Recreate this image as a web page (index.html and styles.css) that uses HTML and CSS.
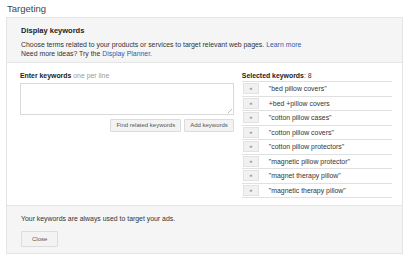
FILE: index.html
```html
<!DOCTYPE html>
<html>
<head>
<meta charset="utf-8">
<link rel="stylesheet" href="styles.css">
</head>
<body>
<div class="title">Targeting</div>
<div class="panel">
  <div class="head">
    <div class="head-title">Display keywords</div>
    <div class="desc">Choose terms related to your products or services to target relevant web pages. <a class="link">Learn more</a><br>Need more ideas? Try the <a class="link">Display Planner</a>.</div>
  </div>
  <div class="body">
    <div class="left">
      <div class="label"><b>Enter keywords</b> <span class="hint">one per line</span></div>
      <div class="textarea"><span class="grip"></span></div>
      <div class="btns">
        <span class="btn">Find related keywords</span>
        <span class="btn">Add keywords</span>
      </div>
    </div>
    <div class="right">
      <div class="label sel"><b>Selected keywords</b>: 8</div>
      <div class="row"><span class="rm">«</span><span class="kw">"bed pillow covers"</span></div>
      <div class="row"><span class="rm">«</span><span class="kw">+bed +pillow covers</span></div>
      <div class="row"><span class="rm">«</span><span class="kw">"cotton pillow cases"</span></div>
      <div class="row"><span class="rm">«</span><span class="kw">"cotton pillow covers"</span></div>
      <div class="row"><span class="rm">«</span><span class="kw">"cotton pillow protectors"</span></div>
      <div class="row"><span class="rm">«</span><span class="kw">"magnetic pillow protector"</span></div>
      <div class="row"><span class="rm">«</span><span class="kw">"magnet therapy pillow"</span></div>
      <div class="row"><span class="rm">«</span><span class="kw">"magnetic therapy pillow"</span></div>
    </div>
  </div>
  <div class="foot">
    <div class="note">Your keywords are always used to target your ads.</div>
    <span class="btn close">Close</span>
  </div>
</div>
</body>
</html>
```
FILE: styles.css
```css
html, body { margin: 0; padding: 0; background: #fff; }
body {
  font-family: Arial, "Liberation Sans", sans-serif;
  font-size: 6.9px;
  color: #333;
  padding: 3px 3px 0 6px;
  width: 397px;
}
.title { font-size: 9.5px; color: #444; padding-left: 1px; height: 14px; line-height: 12px; }
.panel {
  border: 1px solid #e4e4e4;
  height: 235px;
  display: flex;
  flex-direction: column;
}
.head {
  background: #f5f5f5;
  border-bottom: 1px solid #e4e4e4;
  padding: 8px 14px 0 14px;
  height: 36px;
}
.head-title { font-weight: bold; font-size: 7.5px; color: #222; margin-bottom: 5px; line-height: 9px; }
.desc { line-height: 9px; color: #333; }
.link { color: #2a5db0; }
.body {
  display: flex;
  padding: 8px 10px 0 13px;
  height: 134px;
}
.left { width: 215px; }
.label { line-height: 9px; height: 9px; margin-bottom: 3px; }
.label b { color: #222; }
.hint { color: #999; }
.textarea {
  border: 1px solid #d9d9d9;
  height: 30px;
  position: relative;
}
.grip {
  position: absolute; right: 1px; bottom: 1px;
  width: 4px; height: 4px;
  background: linear-gradient(135deg, transparent 45%, #bbb 45%, #bbb 55%, transparent 55%);
}
.btns { display: flex; justify-content: flex-end; gap: 3px; margin-top: 4px; }
.btn {
  display: inline-block;
  border: 1px solid #dcdcdc;
  background: #f3f3f3;
  color: #555;
  font-size: 6px;
  padding: 0 5px;
  height: 11px;
  line-height: 11px;
  border-radius: 1px;
}
.right { margin-left: 8px; width: 151px; }
.sel { border-bottom: 1px solid #e0e0e0; padding-bottom: 1px; margin-bottom: 0; }
.row {
  display: flex;
  align-items: center;
  height: 13.5px;
  border-bottom: 1px solid #e0e0e0;
}
.rm {
  width: 14px; height: 9px;
  margin-left: 1px;
  background: #f1f1f1;
  border: 1px solid #e2e2e2;
  font-size: 5px; line-height: 9px;
  text-align: center; color: #666;
}
.kw { margin-left: 10px; color: #333; }
.foot {
  flex: 1;
  background: #f5f5f5;
  border-top: 1px solid #e4e4e4;
  padding: 8px 14px 0 14px;
}
.note { line-height: 9px; margin-bottom: 8px; }
.close { padding: 0 10px; height: 14px; line-height: 14px; }
```
